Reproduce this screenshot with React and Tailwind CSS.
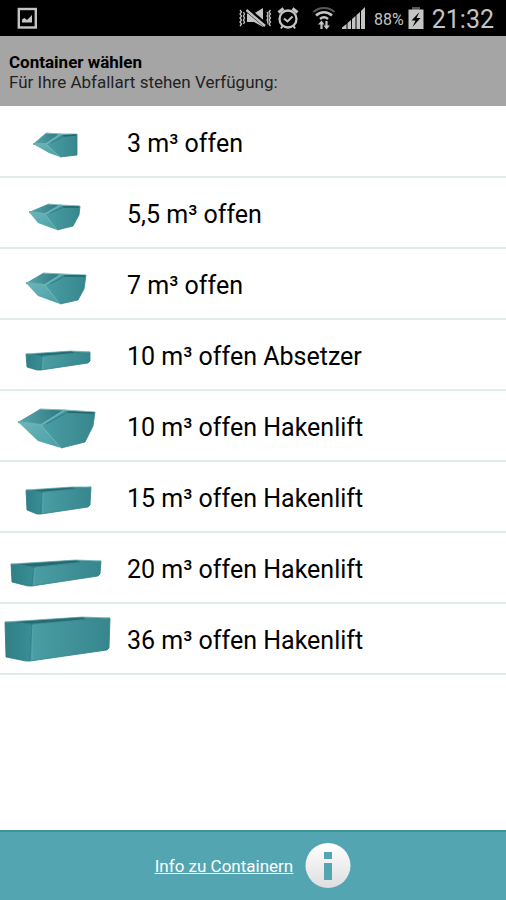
const containers = [
  {
    label: "3 m³ offen",
    kind: "skip",
    tip: [33, 37],
    back: [46, 26],
    ridge: [61, 27],
    lip: [46, 37],
    right: [77, 27],
    side: [77, 38],
    foot: [77, 48],
    bottom: [60, 50],
    heel: [49, 46],
  },
  {
    label: "5,5 m³ offen",
    kind: "skip",
    tip: [29, 34],
    back: [48, 26],
    ridge: [61, 27],
    lip: [45, 36],
    right: [80, 28],
    side: [79, 37],
    foot: [73, 48],
    bottom: [57, 52],
    heel: [38, 45],
  },
  {
    label: "7 m³ offen",
    kind: "skip",
    tip: [26, 34],
    back: [43, 24],
    ridge: [62, 25],
    lip: [45, 36],
    right: [86, 26],
    side: [84, 40],
    foot: [78, 51],
    bottom: [60, 55],
    heel: [38, 47],
  },
  {
    label: "10 m³ offen Absetzer",
    kind: "box",
    left: [26, 34],
    back: [71, 31],
    right: [90, 32],
    corner: [42, 36],
    footRight: [90, 42],
    footCorner: [41, 50],
    footLeft: [27, 47],
  },
  {
    label: "10 m³ offen Hakenlift",
    kind: "skip",
    tip: [18, 31],
    back: [40, 18],
    ridge: [65, 19],
    lip: [41, 34],
    right: [95, 21],
    side: [93, 35],
    foot: [85, 51],
    bottom: [61, 57],
    heel: [38, 50],
  },
  {
    label: "15 m³ offen Hakenlift",
    kind: "box",
    left: [26, 28],
    back: [72, 25],
    right: [91, 25],
    corner: [42, 30],
    footRight: [90, 44],
    footCorner: [41, 52],
    footLeft: [27, 48],
  },
  {
    label: "20 m³ offen Hakenlift",
    kind: "box",
    left: [11, 31],
    back: [76, 27],
    right: [101, 28],
    corner: [34, 34],
    footRight: [100, 42],
    footCorner: [32, 53],
    footLeft: [12, 49],
  },
  {
    label: "36 m³ offen Hakenlift",
    kind: "box",
    left: [5, 18],
    back: [82, 13],
    right: [110, 14],
    corner: [32, 20],
    footRight: [109, 45],
    footCorner: [30, 57],
    footLeft: [6, 53],
  },
];

const points = (...list) => list.map((p) => p.join(",")).join(" ");

function Gradients() {
  return (
    <svg width="0" height="0" className="absolute" aria-hidden="true">
      <defs>
        <linearGradient id="slope" x1="0" y1="0" x2="1" y2="1">
          <stop offset="0" stopColor="#6cb6ba" />
          <stop offset="1" stopColor="#489fa5" />
        </linearGradient>
        <linearGradient id="face" x1="0" y1="0" x2="1" y2="0">
          <stop offset="0" stopColor="#4a9ea4" />
          <stop offset="1" stopColor="#37868d" />
        </linearGradient>
        <linearGradient id="end" x1="0" y1="0" x2="1" y2="0">
          <stop offset="0" stopColor="#2f7f87" />
          <stop offset="1" stopColor="#3a8e95" />
        </linearGradient>
        <linearGradient id="inside" x1="0" y1="0" x2="1" y2="0">
          <stop offset="0" stopColor="#58a7ac" />
          <stop offset="1" stopColor="#2e757d" />
        </linearGradient>
        <linearGradient id="disc" x1="0" y1="0" x2="0" y2="1">
          <stop offset="0" stopColor="#ffffff" />
          <stop offset="1" stopColor="#dedede" />
        </linearGradient>
      </defs>
    </svg>
  );
}

function Skip({ item }) {
  const { tip, back, ridge, lip, right, side, foot, bottom, heel } = item;
  return (
    <g strokeLinejoin="round">
      <polygon points={points(tip, back, ridge, lip)} fill="url(#inside)" />
      <polygon points={points(tip, lip, bottom, heel)} fill="url(#slope)" />
      <polygon points={points(lip, ridge, right, side, foot, bottom)} fill="url(#face)" />
      <polyline points={points(back, ridge, right)} fill="none" stroke="#7fb9bc" />
      <polyline
        points={points([ridge[0] + 2, ridge[1] + 2], [right[0] - 1, right[1] + 1])}
        fill="none"
        stroke="#22656d"
        strokeWidth="1.5"
      />
      <polyline points={points(tip, lip, ridge)} fill="none" stroke="#68b1b6" strokeWidth="2" />
      <polyline
        points={points([lip[0] + 5, lip[1] - 1], [ridge[0] + 3, ridge[1] + 2])}
        fill="none"
        stroke="#327d85"
      />
      <polyline points={points(right, side, foot, bottom)} fill="none" stroke="#32828a" strokeWidth="0.8" />
    </g>
  );
}

function Box({ item }) {
  const { left, back, right, corner, footRight, footCorner, footLeft } = item;
  return (
    <g strokeLinejoin="round">
      <polygon points={points(left, back, right, corner)} fill="#3d8a91" />
      <polygon
        points={points([left[0] + 7, left[1]], back, [back[0] + 4, back[1] + 2], corner)}
        fill="#286a72"
      />
      <polygon
        points={points(left, corner, footCorner, [footCorner[0] - 4, footCorner[1]], footLeft)}
        fill="url(#end)"
        stroke="#2b7880"
        strokeWidth="0.8"
      />
      <polygon
        points={points(corner, right, [footRight[0], footRight[1] - 1], [footRight[0] - 2, footRight[1] + 1], footCorner)}
        fill="url(#face)"
        stroke="#2f7f87"
        strokeWidth="0.8"
      />
      <polyline points={points(left, back, right)} fill="none" stroke="#6aaeb2" strokeWidth="0.8" />
      <polyline
        points={points([corner[0] + 1, corner[1] + 1], [footCorner[0] + 2, footCorner[1] - 1])}
        fill="none"
        stroke="#58a7ac"
        strokeWidth="0.8"
      />
    </g>
  );
}

function StatusBar() {
  return (
    <div className="flex h-9 items-center bg-black pr-3 pl-4 text-[#c4c4c4]">
      <svg className="h-[22px] w-[22px]" viewBox="0 0 22 22" fill="none">
        <rect x="2.8" y="2" width="17" height="18.5" stroke="currentColor" strokeWidth="2.4" />
        <path d="M6 15.500v-3l2.500-1.500 2.500 2 5-5v7.500z" fill="currentColor" />
      </svg>
      <div className="ml-auto flex items-center">
        {/* muted, vibrating speaker */}
        <svg className="h-6 w-[34px]" viewBox="0 0 34 24" fill="none" stroke="currentColor">
          <path d="M2 4l1.500 2L2 8l1.500 2L2 12l1.500 2L2 16l1.500 2L2 20M5.500 6l1 2-1 2 1 2-1 2 1 2-1 2" strokeWidth="1.300" />
          <path d="M29 6l1 2-1 2 1 2-1 2 1 2-1 2M32.500 4L31 6l1.500 2-1.500 2 1.500 2-1.500 2 1.500 2-1.500 2 1.500 2" strokeWidth="1.300" />
          <path d="M9 7.500h7l9-5.500v19l-9-5H9z" fill="currentColor" stroke="none" />
          <path d="M8 2.500l20 17" stroke="#000" strokeWidth="5" />
          <path d="M8.500 4l18.500 16" strokeWidth="2.400" />
        </svg>
        <svg className="ml-1 h-6 w-6" viewBox="0 0 24 24" fill="none" stroke="currentColor">
          <circle cx="12" cy="13" r="8.500" strokeWidth="2.300" />
          <path d="M2.500 6.500l5-4M21.500 6.500l-5-4" strokeWidth="3" />
          <path d="M8 12.500l3.500 3 5-5" strokeWidth="2" />
          <path d="M6.500 20L5 22.500M17.500 20l1.500 2.500" strokeWidth="2" />
        </svg>
        <svg className="ml-3 h-[26px] w-6" viewBox="0 0 24 26" fill="none" stroke="currentColor">
          <path d="M1.500 7C7 1.500 17 1.500 22.500 7" strokeWidth="2" opacity="0.450" />
          <path d="M4 10.500c4.500-4.500 11.500-4.500 16 0M8 14c2.500-2.200 5.500-2.200 8 0" strokeWidth="2.500" />
          <path d="M9.500 24v-7M14.500 16v7" strokeWidth="2.200" />
          <path d="M6 19.500l3.500-4 3 4zM11.500 20.500l3 4 3.500-4z" fill="currentColor" stroke="none" />
        </svg>
        <svg className="ml-1.5 h-6 w-6" viewBox="0 0 24 24" fill="currentColor">
          <path d="M0 23v-1.500L4.500 18v5zM5.500 23v-6L9 14v9zM10 23V13l3.500-3v13zM14.500 23V9L18 6v17zM19 23V5l4-4v22z" />
        </svg>
        <span className="ml-2 pt-1 font-[Roboto,sans-serif] text-base leading-5">88%</span>
        <svg className="ml-1 h-6 w-4" viewBox="0 0 16 24">
          <path d="M4.500 1h7v2.500h4V23H.500V3.500h4z" fill="currentColor" />
          <path d="M4.500 1h7v2.500h-7z" fill="#555" />
          <path d="M11.500 6L3.500 14.500h4L4.500 21l8-9h-4z" fill="#000" />
        </svg>
        <span className="ml-2 pt-1 text-[25px] leading-8">21:32</span>
      </div>
    </div>
  );
}

export default function App() {
  return (
    <div className="flex min-h-screen flex-col bg-white font-[Roboto,sans-serif] text-black">
      <Gradients />
      <StatusBar />

      <header className="bg-[#a5a5a5] px-[9px] pt-4 pb-[14px] text-[17px] leading-5">
        <h1 className="font-bold">Container wählen</h1>
        <p className="text-[#222]">Für Ihre Abfallart stehen Verfügung:</p>
      </header>

      <ul className="pt-px">
        {containers.map((item) => (
          <li key={item.label} className="border-b-2 border-[#deeceb]">
            <button type="button" className="flex w-full items-center text-left">
              <svg className="h-[69px] w-[127px] shrink-0" viewBox="0 0 127 69" aria-hidden="true">
                {item.kind === "skip" ? <Skip item={item} /> : <Box item={item} />}
              </svg>
              <span className="pt-1 text-[25px] leading-8">{item.label}</span>
            </button>
          </li>
        ))}
      </ul>

      <footer className="mt-auto flex h-[70px] items-center justify-center border-t-2 border-[#3b939c] bg-[#53a6b1] text-white">
        <a href="#info" className="flex items-center gap-3 text-[17px] leading-6">
          <span className="underline">Info zu Containern</span>
          <svg className="h-[46px] w-[46px]" viewBox="0 0 46 46" aria-hidden="true">
            <circle cx="23" cy="22.5" r="22.5" fill="url(#disc)" />
            <path d="M19 9h8v7h-8zM19 20h8v17h-8z" fill="#53a6b1" />
          </svg>
        </a>
      </footer>
    </div>
  );
}
